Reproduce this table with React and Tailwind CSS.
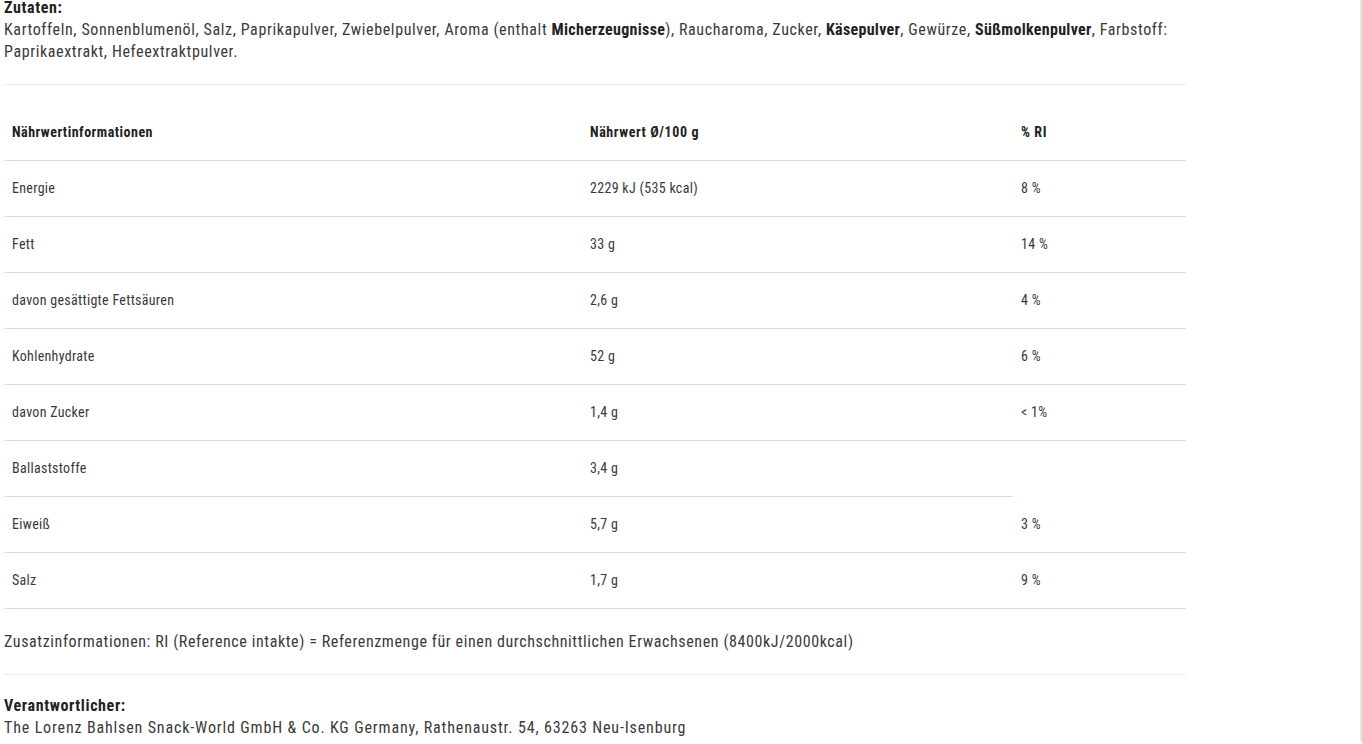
import React from "react";

const rows = [
  { name: "Energie", value: "2229 kJ (535 kcal)", ri: "8 %" },
  { name: "Fett", value: "33 g", ri: "14 %" },
  { name: "davon gesättigte Fettsäuren", value: "2,6 g", ri: "4 %" },
  { name: "Kohlenhydrate", value: "52 g", ri: "6 %" },
  { name: "davon Zucker", value: "1,4 g", ri: "< 1%" },
  { name: "Ballaststoffe", value: "3,4 g", ri: "", noRiBorder: true },
  { name: "Eiweiß", value: "5,7 g", ri: "3 %" },
  { name: "Salz", value: "1,7 g", ri: "9 %" },
];

const cell = "h-[56px] px-2 border-b border-[#d3e1e5]";

const App = () => {
  return (
    <div className="min-h-[744px] w-[1362px] border-r-2 border-[#e6e6e6] bg-white font-['Roboto',sans-serif] font-stretch-condensed text-[#3a3a3a]">
      <div className="w-[1182px] ml-[4px] -mt-[3px]">
        <div className="text-[16px] leading-[22px] tracking-[0.62px]">
          <div className="font-bold text-[#222]">Zutaten:</div>
          <p>
            Kartoffeln, Sonnenblumenöl, Salz, Paprikapulver, Zwiebelpulver, Aroma (enthalt{" "}
            <b className="text-[#222] tracking-[0.3px]">Micherzeugnisse</b>), Raucharoma, Zucker,{" "}
            <b className="text-[#222] tracking-[0.3px]">Käsepulver</b>, Gewürze,{" "}
            <b className="text-[#222] tracking-[0.3px]">Süßmolkenpulver</b>, Farbstoff: Paprikaextrakt,
            Hefeextraktpulver.
          </p>
        </div>

        <hr className="mt-[21px] border-t border-[#ececec]" />

        <table className="mt-[19px] w-full border-collapse text-[14px] leading-[20px] tracking-[0.3px]">
          <thead>
            <tr>
              <th className={`${cell} w-[578px] text-left font-bold text-[#222] tracking-[0.5px]`}>Nährwertinformationen</th>
              <th className={`${cell} w-[431px] text-left font-bold text-[#222] tracking-[0.6px]`}>Nährwert Ø/100 g</th>
              <th className={`${cell} text-left font-bold text-[#222] tracking-[0.6px]`}>% RI</th>
            </tr>
          </thead>
          <tbody>
            {rows.map((r) => (
              <tr key={r.name}>
                <td className={cell}>{r.name}</td>
                <td className={cell}>{r.value}</td>
                <td className={r.noRiBorder ? "h-[56px] px-2" : cell}>{r.ri}</td>
              </tr>
            ))}
          </tbody>
        </table>

        <p className="mt-[22px] text-[16px] leading-[22px] tracking-[0.6px]">
          Zusatzinformationen: RI (Reference intakte) = Referenzmenge für einen durchschnittlichen
          Erwachsenen (8400kJ/2000kcal)
        </p>

        <hr className="mt-[21px] border-t border-[#ececec]" />

        <div className="mt-[20px] text-[16px] leading-[22px] tracking-[0.62px]">
          <div className="font-bold text-[#222]">Verantwortlicher:</div>
          <p className="tracking-[0.85px]">
            The Lorenz Bahlsen Snack-World GmbH &amp; Co. KG Germany, Rathenaustr. 54, 63263 Neu-Isenburg
          </p>
        </div>
      </div>
    </div>
  );
};

export default App;
